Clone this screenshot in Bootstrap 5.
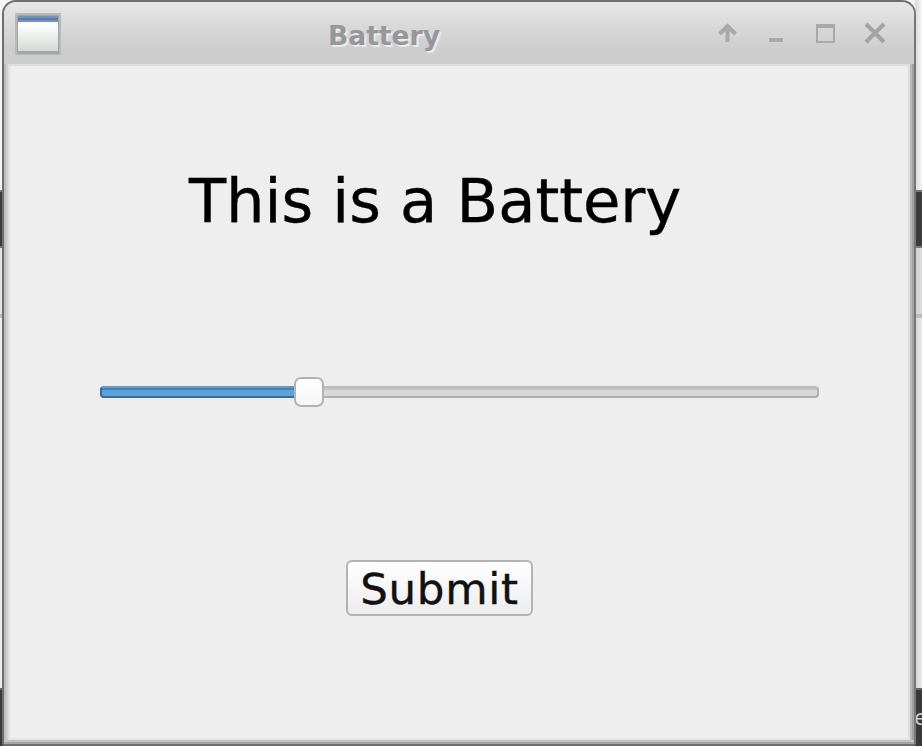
<!DOCTYPE html>
<html lang="en">
<head>
<meta charset="utf-8">
<meta name="viewport" content="width=device-width, initial-scale=1">
<title>Battery</title>
<link rel="stylesheet" href="https://cdn.jsdelivr.net/npm/bootstrap@5.3.0/dist/css/bootstrap.min.css">
<style>
body { font-family: "DejaVu Sans", sans-serif; }
.desktop { width: 922px; height: 746px; background: #e8e8e8; }
/* page strips visible behind the window */
.strip-top { height: 190px; background: linear-gradient(90deg, #f4f4f4 0 914px, #dcdcdc 916px, #f6f6f6 922px); }
.strip-dark { height: 58px; background: #3b3b3b; border-top: 2px solid #777; border-bottom: 2px solid #777; }
.strip-mid { height: 66px; background: linear-gradient(90deg, #e4e4e4 0 914px, #cfcfcf 916px, #dedede 922px); }
.strip-line { height: 4px; background: #bcbcbc; }
.strip-low { height: 370px; background: linear-gradient(90deg, #ececec 0 914px, #d4d4d4 916px, #ebebeb 922px); }
.strip-foot { height: 58px; background: #38393a; border-top: 2px solid #666; color: #ccc; font-size: 22px; line-height: 24px; padding: 16px 0 0 914px; }
/* window frame */
.win { left: 2px; top: 0; width: 914px; height: 746px; border: 2px solid #6e6e6e; border-right-color: #777; border-radius: 14px 14px 3px 3px; background: #cdcdcd; }
.win-title { height: 62px; flex: none; background: linear-gradient(#e6e6e6, #cdcdcd 75%); padding: 0 26px 0 11px; }
.win-icon { width: 46px; height: 42px; margin-top: 2px; }
.win-name { font-size: 26.6px; line-height: 32px; color: #979797; text-shadow: 2px 2px 1px #ececec; padding-right: 8px; margin-top: 5px; }
.win-tools { gap: 23px; margin-top: 0; }
.win-body { margin: 0 4px; border: 2px solid #dedede; border-bottom-color: #e4e4e4; border-left-color: #e1e1e1; background: #eee; box-shadow: -2px 0 #d0d0d0, -4px 0 #bdbdbd, 2px 0 #bababa, 4px 0 #a0a0a0; }
.win-base { height: 4px; flex: none; background: linear-gradient(#c1c1c1 50%, #a4a4a4 50%); }
.headline { font-size: 60.8px; line-height: 72px; margin: 99px 0 0 179px; color: #000; white-space: nowrap; letter-spacing: -.05px; -webkit-text-stroke: .4px #000; }
/* slider */
.level { width: 719px; height: 30px; margin: 140px 0 0 90px; }
.groove { height: 12px; border: 2px solid #aeaeae; border-top-color: #bcbcbc; border-radius: 4px; background: linear-gradient(#c3c3c3 2px, #d9d9d9 2px); }
.filled { height: 12px; width: 208px; border: 2px solid #376b99; border-top-color: #7195b3; border-radius: 4px; background: linear-gradient(#4381b4 2px, #5ba3dc 2px); top: 9px; left: 0; }
.knob { width: 30px; height: 30px; left: 194px; top: 0; border: 2px solid #b2b2b2; border-radius: 7px; background: linear-gradient(#fff, #f6f6f6); }
.submit { width: 187px; height: 56px; margin: 153px 0 0 336px; padding: 2px 0 0; border: 2px solid #b3b3b3; border-radius: 6px; background: linear-gradient(#fff, #ededed); color: #111; font-size: 43.5px; line-height: 50px; letter-spacing: .7px; -webkit-text-stroke: .4px #111; }
</style>
<script src="https://cdn.jsdelivr.net/npm/bootstrap@5.3.0/dist/js/bootstrap.bundle.min.js"></script>
</head>
<body class="overflow-hidden">
<div class="desktop position-relative overflow-hidden">
  <div class="d-flex flex-column">
    <div class="strip-top"></div>
    <div class="strip-dark"></div>
    <div class="strip-mid"></div>
    <div class="strip-line"></div>
    <div class="strip-low"></div>
    <div class="strip-foot">e</div>
  </div>
  <main class="win position-absolute d-flex flex-column overflow-hidden">
    <header class="win-title d-flex align-items-center">
      <svg class="win-icon" viewBox="0 0 46 42">
        <defs><linearGradient id="pane" x2="0" y2="1"><stop offset="0" stop-color="#fff"/><stop offset=".3" stop-color="#fbfbfb"/><stop offset="1" stop-color="#d5d9d2"/></linearGradient></defs>
        <rect width="46" height="42" rx="1" fill="#b7b8b8"/>
        <rect x="2" y="2" width="42" height="39" fill="#a0a5a5"/>
        <rect x="3" y="4" width="40" height="34" fill="url(#pane)"/>
        <path d="M3 3h40v6H3z" fill="#7891bd"/><path d="M3 5h40v2H3z" fill="#587aac"/>
      </svg>
      <div class="win-name fw-bold flex-grow-1 text-center">Battery</div>
      <div class="win-tools d-flex">
        <svg width="26" height="26" viewBox="0 0 26 26" fill="none" stroke="#a9a9a9" stroke-width="4"><path d="M12.5 22V6M4.500 14l8-8 8 8"/></svg>
        <svg width="26" height="26" viewBox="0 0 26 26"><path d="M5 18h14v4H5z" fill="#a9a9a9"/></svg>
        <svg width="26" height="26" viewBox="0 0 26 26"><path fill-rule="evenodd" d="M3 4h19v19H3zM5 8v13h15V8z" fill="#a9a9a9"/></svg>
        <svg width="26" height="26" viewBox="0 0 26 26" fill="none" stroke="#a3a3a3" stroke-width="4"><path d="M4 4l18 18M22 4L4 22"/></svg>
      </div>
    </header>
    <section class="win-body flex-grow-1">
      <h1 class="headline fw-normal">This is a Battery</h1>
      <div class="level position-relative d-flex align-items-center">
        <div class="groove w-100"></div>
        <div class="filled position-absolute"></div>
        <div class="knob position-absolute"></div>
      </div>
      <button type="button" class="submit btn d-block">Submit</button>
    </section>
    <div class="win-base"></div>
  </main>
</div>
</body>
</html>
